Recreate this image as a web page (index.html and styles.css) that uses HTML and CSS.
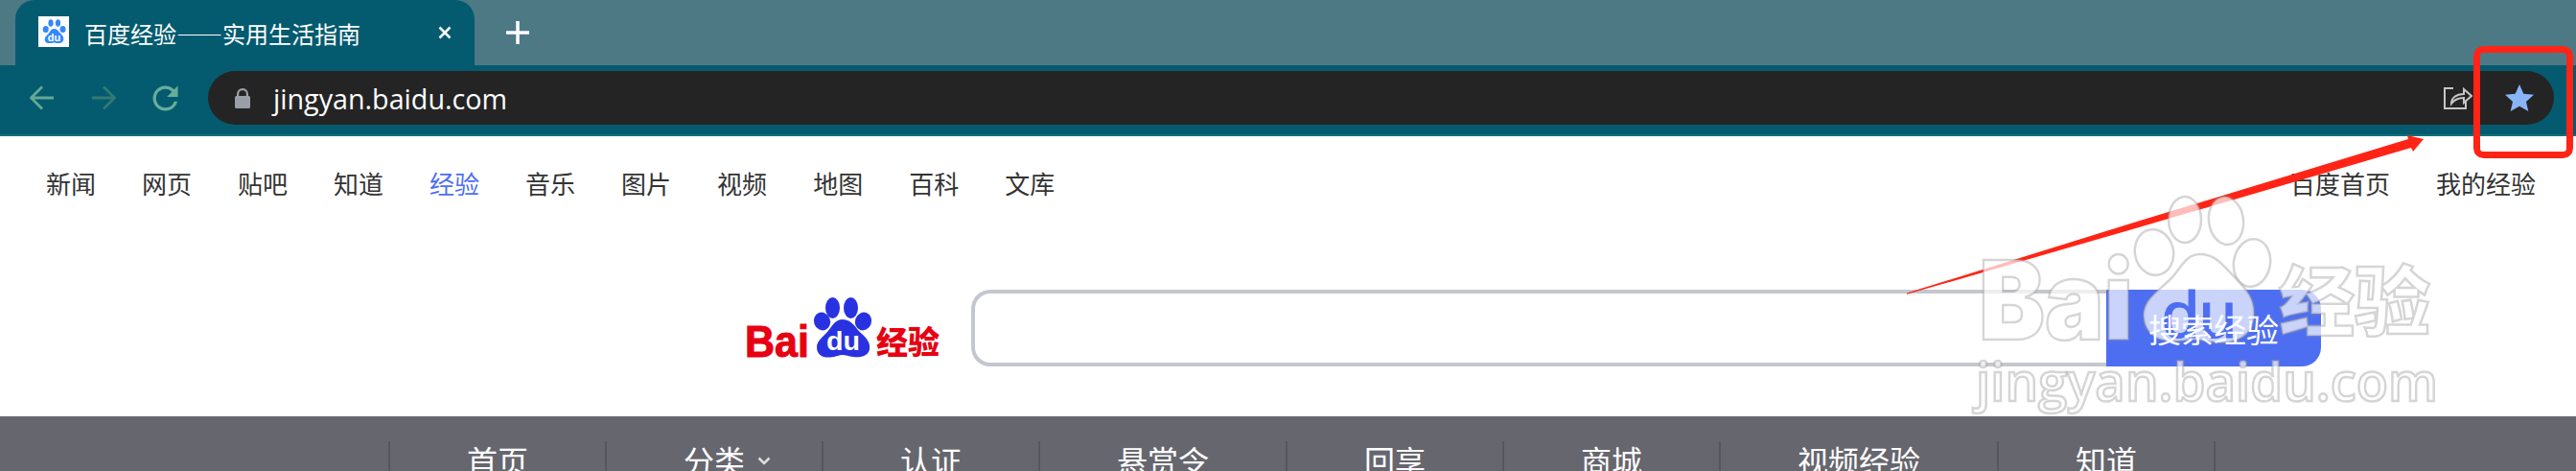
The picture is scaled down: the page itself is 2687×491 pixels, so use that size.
FILE: index.html
```html
<!DOCTYPE html>
<html lang="zh-CN">
<head>
  <meta charset="UTF-8" />
  <title>百度经验——实用生活指南</title>
  <link rel="stylesheet" href="styles.css">
</head>
<body>
  <!-- Browser chrome -->
  <div class="tabstrip">
    <div class="tab">
      <svg class="favicon" viewBox="0 0 32 32">
        <rect width="32" height="32" fill="#fff"/>
        <ellipse cx="7.7" cy="13.5" rx="3" ry="3.6" fill="#3388ff"/>
        <ellipse cx="13" cy="7" rx="2.6" ry="3.8" fill="#3388ff"/>
        <ellipse cx="20.5" cy="7" rx="2.6" ry="3.8" fill="#3388ff"/>
        <ellipse cx="25.5" cy="13.5" rx="3" ry="3.6" fill="#3388ff"/>
        <path fill="#3388ff" d="M16.5 13c3.500 0 4.500 3 7 5.200 2 1.800 3.200 3.800 2.800 6-.5 3-3.500 4.200-6.500 3.800-1.500-.2-2.300-.6-3.300-.6s-2 .5-4 .7c-3 .2-5.700-1-5.800-4.200 0-2.700 2.200-3.900 4-6 1.800-2 2.300-4.900 5.800-4.900z"/>
        <text class="favicon-du" x="16.400" y="26" text-anchor="middle">du</text>
      </svg>
      <span class="tab-title">百度经验——实用生活指南</span>
      <svg class="tab-close" viewBox="0 0 14 14"><path d="M1.500 1.500l11 11M12.500 1.500l-11 11"/></svg>
    </div>
    <svg class="new-tab" viewBox="0 0 24 24"><path d="M12 0v24M0 12h24"/></svg>
  </div>

  <div class="toolbar">
    <svg class="tool-icon back" viewBox="0 0 26 26"><path d="M25 13H2M13 1.500L1.500 13 13 24.500"/></svg>
    <svg class="tool-icon forward" viewBox="0 0 26 26"><path d="M1 13h23M13 1.500L24.500 13 13 24.500"/></svg>
    <svg class="reload" viewBox="0 0 24 24"><path d="M17.650 6.350A7.958 7.958 0 0 0 12 4c-4.420 0-7.990 3.580-7.990 8s3.570 8 7.990 8c3.730 0 6.840-2.550 7.730-6h-2.080A5.990 5.990 0 0 1 12 18c-3.310 0-6-2.690-6-6s2.690-6 6-6c1.660 0 3.140.690 4.220 1.780L13 11h7V4l-2.350 2.350z"/></svg>
    <div class="omnibox">
      <svg class="lock" viewBox="0 0 16 21"><path d="M2 8V6a6 6 0 0 1 12 0v2h.5A1.500 1.500 0 0 1 16 9.500v10a1.500 1.500 0 0 1-1.500 1.500h-13A1.500 1.500 0 0 1 0 19.500v-10A1.500 1.500 0 0 1 1.500 8zm2.200 0h7.600V6a3.800 3.800 0 0 0-7.600 0z"/></svg>
      <span class="url">jingyan.baidu.com</span>
      <svg class="share" viewBox="0 0 30 24"><path d="M10 2H1v21h22v-7"/><path d="M8 18c0-6 5-10 13-10V3l8 7-8 7v-5c-6 0-10 2-13 6z"/></svg>
      <svg class="star" viewBox="0 0 30 28"><path d="M15 0l4.300 9.800L30 10.800l-8 7.200 2.300 10L15 22.700 5.700 28 8 18l-8-7.200 10.700-1z"/></svg>
    </div>
  </div>

  <!-- Page -->
  <nav class="topnav">
    <a href="#">新闻</a>
    <a href="#">网页</a>
    <a href="#">贴吧</a>
    <a href="#">知道</a>
    <a href="#" class="active">经验</a>
    <a href="#">音乐</a>
    <a href="#">图片</a>
    <a href="#">视频</a>
    <a href="#">地图</a>
    <a href="#">百科</a>
    <a href="#">文库</a>
    <div class="topnav-right">
      <a href="#">百度首页</a>
      <a href="#">我的经验</a>
    </div>
  </nav>

  <div class="search-row">
    <svg class="logo" viewBox="0 0 205 64">
      <text class="logo-bai" x="0" y="62" textLength="67" lengthAdjust="spacingAndGlyphs">Bai</text>
      <ellipse cx="80.500" cy="25" rx="8.500" ry="9.500" transform="rotate(-20 80.500 25)" class="paw"/>
      <ellipse cx="91.500" cy="11" rx="7.500" ry="11" class="paw"/>
      <ellipse cx="110.500" cy="11" rx="7.500" ry="11" class="paw"/>
      <ellipse cx="123.500" cy="25" rx="8.500" ry="9.500" transform="rotate(20 123.500 25)" class="paw"/>
      <path class="paw" d="M102 23c10 0 13 9 20 15 6 5 9 11 8 16-1 7-9 9-17 8-5-.5-8-2-11-2-4 0-7 2-13 2.500-8 .5-14-2.500-14-10.500 0-7 6-10 11-16 5-6 8-13 16-13z"/>
      <text class="logo-du" x="85" y="55" textLength="35" lengthAdjust="spacingAndGlyphs">du</text>
      <text class="logo-jy" x="137" y="59">经验</text>
    </svg>
    <div class="search">
      <div class="search-input"></div>
      <button class="search-btn"><span class="search-label">搜索经验</span></button>
    </div>
  </div>

  <nav class="mainnav">
    <a href="#">首页</a>
    <a href="#">分类<svg class="caret" viewBox="0 0 14 9"><path d="M1.500 1.500L7 7l5.500-5.500"/></svg></a>
    <a href="#">认证</a>
    <a href="#">悬赏令</a>
    <a href="#">回享</a>
    <a href="#">商城</a>
    <a href="#">视频经验</a>
    <a href="#">知道</a>
  </nav>

  <!-- Annotations and watermark, on top of the screenshot -->
  <svg class="overlay" viewBox="0 0 2687 491">
    <path class="mark" d="M1989 305.500L2220 233.800 2512 145 2511 141 2528 145 2517 158 2515 154 2220 240.200 1989 306.800z"/>
    <rect class="mark-box" x="2583.500" y="51.500" width="97" height="110" rx="7"/>
    <g class="wm">
      <text class="wm-latin" x="2064" y="354" textLength="161" lengthAdjust="spacingAndGlyphs">Bai</text>
      <ellipse cx="2247" cy="263" rx="20" ry="24" transform="rotate(-12 2247 263)"/>
      <ellipse cx="2279" cy="229" rx="17" ry="24"/>
      <ellipse cx="2322" cy="230" rx="18" ry="25" transform="rotate(-8 2322 230)"/>
      <ellipse cx="2349" cy="274" rx="19" ry="25" transform="rotate(10 2349 274)"/>
      <path d="M2295 265c16 0 24 12 36 24 14 14 21 24 20 40-1 25-26 31-46 27-10-2-18-3-28-1-20 3-40-3-41-26 0-17 16-26 28-38 11-11 15-26 31-26z"/>
      <text class="wm-du" x="2255" y="352" textLength="78" lengthAdjust="spacingAndGlyphs">du</text>
      <text class="wm-cjk" x="2377" y="344">经验</text>
      <text class="wm-url" x="2061" y="418" textLength="482" lengthAdjust="spacingAndGlyphs">jingyan.baidu.com</text>
    </g>
  </svg>
</body>
</html>
```

FILE: styles.css
```css
html, body {
  margin: 0;
  height: 100%;
  overflow: hidden;
}

body {
  position: relative;
  display: flex;
  flex-direction: column;
  background: #fff;
  font-family: "Noto Sans CJK SC", "Noto Sans", sans-serif;
}

a {
  color: inherit;
  text-decoration: none;
}

/* Tab strip */
.tabstrip {
  display: flex;
  align-items: center;
  flex: 0 0 68px;
  padding-left: 16px;
  background: #4d7985;
}

.tab {
  display: flex;
  align-items: center;
  box-sizing: border-box;
  width: 479px;
  height: 68px;
  padding-left: 24px;
  background: #045b6f;
  border-radius: 20px 20px 0 0;
}

.favicon {
  width: 32px;
  height: 32px;
  margin-top: -2px;
}

.favicon-du {
  fill: #fff;
  font: bold 11px "Liberation Sans", sans-serif;
}

.tab-title {
  flex: 0 0 369px;
  margin-left: 16px;
  color: #fff;
  font-size: 24px;
  white-space: nowrap;
}

.tab-close {
  width: 14px;
  height: 14px;
  fill: none;
  stroke: #fff;
  stroke-width: 2.500;
}

.new-tab {
  width: 24px;
  height: 24px;
  margin-left: 33px;
  fill: none;
  stroke: #fff;
  stroke-width: 3.500;
}

/* Toolbar */
.toolbar {
  display: flex;
  align-items: center;
  box-sizing: border-box;
  flex: 0 0 74px;
  padding: 0 23px 4px 31px;
  background: #045b6f;
  border-bottom: 2px solid #10707a;
}

.tool-icon {
  width: 26px;
  height: 26px;
  fill: none;
  stroke-width: 2.800;
}

.back {
  stroke: #64a896;
}

.forward {
  margin-left: 38px;
  stroke: #327a74;
}

.reload {
  width: 39px;
  height: 39px;
  margin-left: 32px;
  fill: #68ad9b;
}

.omnibox {
  display: flex;
  align-items: center;
  flex: 1;
  height: 56px;
  margin-left: 25px;
  padding-left: 28px;
  background: #242424;
  border-radius: 28px;
}

.lock {
  width: 16px;
  height: 21px;
  fill: #9a9ea6;
}

.url {
  margin-left: 24px;
  color: #fff;
  font-family: "Open Sans", sans-serif;
  font-size: 28.7px;
}

.share {
  width: 30px;
  height: 24px;
  margin-left: auto;
  fill: none;
  stroke: #c6c6c6;
  stroke-width: 2;
}

.star {
  width: 30px;
  height: 28px;
  margin: 0 21px 0 34px;
  fill: #8ab4f8;
}

/* Top links */
.topnav {
  display: flex;
  align-items: center;
  box-sizing: border-box;
  flex: 0 0 96px;
  gap: 48px;
  padding: 0 42px 0 48px;
  color: #333;
  font-size: 26px;
}

.topnav .active {
  color: #4e6ef2;
}

.topnav-right {
  display: flex;
  gap: 48px;
  margin-left: auto;
}

/* Logo and search */
.search-row {
  display: flex;
  align-items: flex-start;
  box-sizing: border-box;
  flex: 0 0 196px;
  padding: 64px 0 0 777px;
}

.logo {
  width: 205px;
  height: 64px;
  margin: 8px 31px 0 0;
}

.logo-bai {
  fill: #e60012;
  stroke: #e60012;
  stroke-width: 1;
  font: bold 47px "Liberation Sans", sans-serif;
}

.paw {
  fill: #2932e1;
}

.logo-du {
  fill: #fff;
  font: bold 27px "Liberation Sans", sans-serif;
}

.logo-jy {
  fill: #e60012;
  font: 900 33px "Noto Sans CJK SC", sans-serif;
}

.search {
  display: flex;
  width: 1408px;
  height: 80px;
}

.search-input {
  flex: 1;
  box-sizing: border-box;
  background: #fff;
  border: 4px solid #c4c7ce;
  border-right: 0;
  border-radius: 20px 0 0 20px;
}

.search-btn {
  width: 224px;
  padding: 0;
  color: #fff;
  font: 34px "Noto Sans CJK SC", sans-serif;
  background: #4e6ef2;
  border: 0;
  border-radius: 0 20px 20px 0;
}

/* stays readable above the watermark */
.search-label {
  position: relative;
  z-index: 2;
}

/* Main nav band */
.mainnav {
  display: flex;
  flex: 1;
  padding: 26px 0 0 405px;
  color: #fff;
  background: #66666e;
  font-size: 32px;
  line-height: 38px;
}

.mainnav a {
  padding: 0 80px;
  border-left: 2px solid #56565c;
}

.mainnav a:last-child {
  border-right: 2px solid #56565c;
}

.caret {
  width: 14px;
  height: 9px;
  margin: 0 -27px 8px 13px;
  fill: none;
  stroke: #ddd;
  stroke-width: 2.500;
  vertical-align: middle;
}

/* Overlay */
.overlay {
  position: absolute;
  top: 0;
  left: 0;
  z-index: 1;
  width: 2687px;
  height: 491px;
  pointer-events: none;
}

.mark {
  fill: #ff2416;
}

.mark-box {
  fill: none;
  stroke: #ff2416;
  stroke-width: 7;
}

.wm {
  fill: rgba(255, 255, 255, 0.7);
  stroke: rgba(150, 150, 150, 0.4);
  stroke-width: 2.500;
  filter: blur(0.6px);
}

.wm-latin {
  font: 900 114px Inter, "Liberation Sans", sans-serif;
}

.wm-du {
  fill: #4e6ef2;
  stroke: #4e6ef2;
  stroke-width: 1;
  font: 68px "Liberation Sans", sans-serif;
}

.wm-cjk {
  font: 900 79px "Noto Sans CJK SC", sans-serif;
}

.wm-url {
  font: 600 56px "Open Sans", sans-serif;
}
```
